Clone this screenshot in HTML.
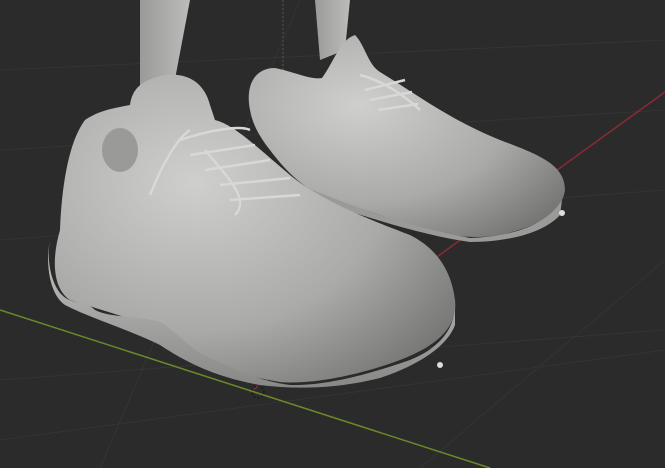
<!DOCTYPE html>
<html><head><meta charset="utf-8"><style>
html,body{margin:0;padding:0;background:#2a2a2a;}
svg{display:block}
</style></head><body>
<svg width="665" height="468" viewBox="0 0 665 468" xmlns="http://www.w3.org/2000/svg">
<defs>
<radialGradient id="g1" cx="0.35" cy="0.35" r="0.8">
<stop offset="0" stop-color="#cfcfcd"/><stop offset="0.6" stop-color="#aaaaa8"/><stop offset="1" stop-color="#767674"/></radialGradient>
<linearGradient id="s1" x1="0" y1="0" x2="0" y2="1">
<stop offset="0" stop-color="#c4c4c2"/><stop offset="1" stop-color="#888886"/></linearGradient>
<linearGradient id="leg" x1="0" y1="0" x2="1" y2="0">
<stop offset="0" stop-color="#9a9a98"/><stop offset="1" stop-color="#bcbcba"/></linearGradient>
</defs>
<rect width="665" height="468" fill="#2b2b2b"/>
<g stroke="#363636" stroke-width="0.8" fill="none">
<line x1="0" y1="70" x2="665" y2="40"/>
<line x1="0" y1="150" x2="665" y2="110"/>
<line x1="0" y1="240" x2="665" y2="190"/>
<line x1="0" y1="380" x2="665" y2="330"/>
<line x1="100" y1="468" x2="300" y2="0"/>
<line x1="420" y1="468" x2="665" y2="260"/>
<line x1="0" y1="440" x2="665" y2="350"/>
</g>
<line x1="250" y1="392" x2="665" y2="92" stroke="#8a2a32" stroke-width="1.5"/>
<line x1="0" y1="310" x2="490" y2="468" stroke="#6a8a2a" stroke-width="1.5"/>
<line x1="283" y1="0" x2="283" y2="90" stroke="#555" stroke-dasharray="2,2"/>
<polygon points="140,0 190,0 172,95 140,95" fill="url(#leg)"/>
<polygon points="315,0 350,0 345,50 320,60" fill="url(#leg)"/>
<path d="M250,110 C245,85 255,68 275,68 C295,72 310,80 322,78 C335,60 340,40 355,35 C365,45 368,65 380,72 C410,90 450,120 500,140 C540,155 565,165 565,190 C562,210 545,225 500,235 C470,240 440,235 410,225 C380,215 350,205 320,195 C300,185 285,170 270,150 C258,135 252,122 250,110 Z" fill="url(#g1)"/>
<path d="M300,185 C350,205 400,225 470,238 C520,236 548,222 562,200 L560,215 C545,232 510,242 470,242 C420,235 360,215 300,195 Z" fill="#9a9a98"/>
<g stroke="#d8d8d6" stroke-width="2.5" fill="none">
<path d="M360,75 C380,80 400,92 420,110"/>
<path d="M365,90 L405,80"/><path d="M370,100 L412,92"/><path d="M378,110 L418,104"/>
</g>
<path d="M60,230 C62,180 70,140 85,120 C100,110 115,108 130,105 C132,90 140,80 165,75 C190,72 205,85 210,105 L215,120 C235,125 260,150 290,175 C320,200 370,220 410,235 C440,250 452,275 455,300 C458,325 440,345 400,360 C360,375 310,385 280,382 C240,376 200,360 170,335 C140,320 100,310 70,300 C55,290 50,265 60,230 Z" fill="url(#g1)"/>
<path d="M50,240 C46,262 52,285 62,295 C72,305 85,300 95,310 C110,318 135,315 160,322 C175,330 190,350 210,358 C240,372 265,382 290,385 C330,386 375,372 410,360 C440,348 455,328 455,305 L455,325 C448,345 420,365 380,378 C340,388 300,390 260,385 C220,378 190,365 160,345 C130,330 90,318 65,305 C50,295 45,265 50,240 Z" fill="url(#s1)"/>
<ellipse cx="120" cy="150" rx="18" ry="22" fill="#9a9a98"/>
<g stroke="#d8d8d6" stroke-width="2.5" fill="none">
<path d="M150,195 C160,170 175,140 190,130"/>
<path d="M180,140 C210,130 240,125 250,130"/>
<path d="M190,155 L255,145"/><path d="M205,170 L270,160"/><path d="M220,185 L290,178"/><path d="M230,200 L300,195"/>
<path d="M205,150 C230,180 250,200 235,215"/>
</g>
<circle cx="440" cy="365" r="3" fill="#ddd"/><circle cx="562" cy="213" r="3" fill="#ddd"/>
<circle cx="258" cy="392" r="6" fill="none" stroke="#111" stroke-dasharray="2,2"/>
</svg>
</body></html>
